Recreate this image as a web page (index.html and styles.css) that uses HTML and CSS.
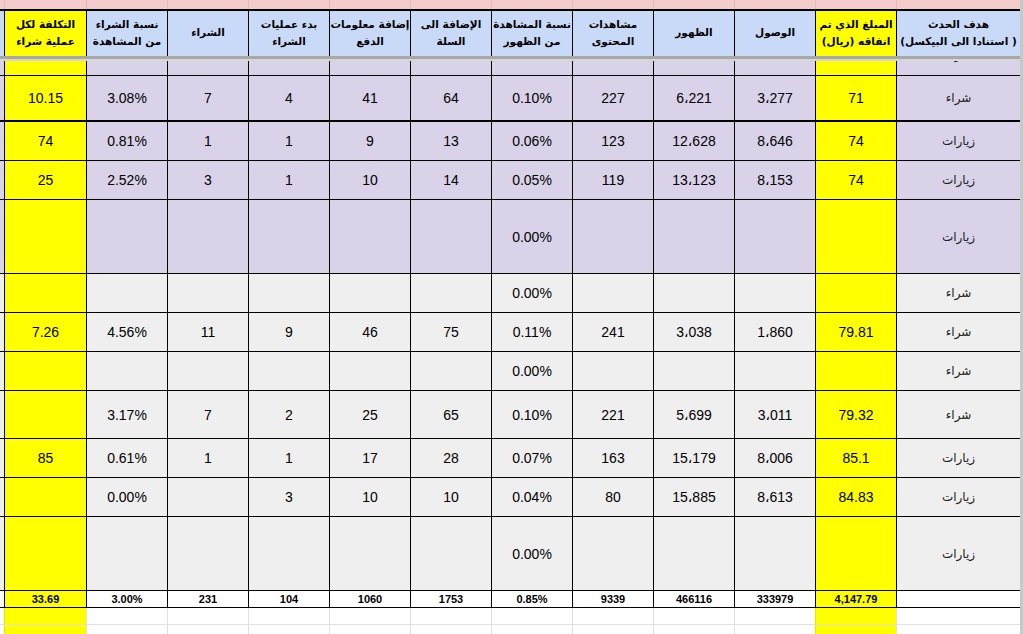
FILE: index.html
```html
<!DOCTYPE html>
<html lang="ar">
<head>
<meta charset="utf-8">
<title>تقرير الحملات</title>
<link rel="stylesheet" href="styles.css">
</head>
<body>
<div class="page">
  <div class="sheet" dir="rtl">
    <div class="row band">
      <div class="cell"></div><div class="cell"></div><div class="cell"></div><div class="cell"></div><div class="cell"></div><div class="cell"></div><div class="cell"></div><div class="cell"></div><div class="cell"></div><div class="cell"></div><div class="cell"></div><div class="cell"></div><div class="cell"></div>
    </div>
    <div class="row head">
      <div class="cell">هدف الحدث<br>( استنادا الى البيكسل)</div>
      <div class="cell y">المبلغ الذي تم<br>انفاقه (ريال)</div>
      <div class="cell">الوصول</div>
      <div class="cell">الظهور</div>
      <div class="cell">مشاهدات<br>المحتوى</div>
      <div class="cell">نسبة المشاهدة<br>من الظهور</div>
      <div class="cell">الإضافة الى<br>السلة</div>
      <div class="cell">إضافة معلومات<br>الدفع</div>
      <div class="cell">بدء عمليات<br>الشراء</div>
      <div class="cell">الشراء</div>
      <div class="cell">نسبة الشراء<br>من المشاهدة</div>
      <div class="cell y">التكلفة لكل<br>عملية شراء</div>
      <div class="cell"></div>
    </div>
    <div class="freeze"></div>

    <div class="row lav hA">
      <div class="cell clip"><span class="clipped">شراء</span></div><div class="cell y"></div><div class="cell"></div><div class="cell"></div><div class="cell"></div><div class="cell"></div><div class="cell"></div><div class="cell"></div><div class="cell"></div><div class="cell"></div><div class="cell"></div><div class="cell y"></div><div class="cell"></div>
    </div>
    <div class="row lav hB">
      <div class="cell ar">شراء</div><div class="cell y">71</div><div class="cell">3،277</div><div class="cell">6،221</div><div class="cell">227</div><div class="cell">0.10%</div><div class="cell">64</div><div class="cell">41</div><div class="cell">4</div><div class="cell">7</div><div class="cell">3.08%</div><div class="cell y">10.15</div><div class="cell"></div>
    </div>
    <div class="row lav h39">
      <div class="cell ar">زيارات</div><div class="cell y">74</div><div class="cell">8،646</div><div class="cell">12،628</div><div class="cell">123</div><div class="cell">0.06%</div><div class="cell">13</div><div class="cell">9</div><div class="cell">1</div><div class="cell">1</div><div class="cell">0.81%</div><div class="cell y">74</div><div class="cell"></div>
    </div>
    <div class="row lav h39">
      <div class="cell ar">زيارات</div><div class="cell y">74</div><div class="cell">8،153</div><div class="cell">13،123</div><div class="cell">119</div><div class="cell">0.05%</div><div class="cell">14</div><div class="cell">10</div><div class="cell">1</div><div class="cell">3</div><div class="cell">2.52%</div><div class="cell y">25</div><div class="cell"></div>
    </div>
    <div class="row lav h74">
      <div class="cell ar">زيارات</div><div class="cell y"></div><div class="cell"></div><div class="cell"></div><div class="cell"></div><div class="cell">0.00%</div><div class="cell"></div><div class="cell"></div><div class="cell"></div><div class="cell"></div><div class="cell"></div><div class="cell y"></div><div class="cell"></div>
    </div>
    <div class="row gry h39">
      <div class="cell ar">شراء</div><div class="cell y"></div><div class="cell"></div><div class="cell"></div><div class="cell"></div><div class="cell">0.00%</div><div class="cell"></div><div class="cell"></div><div class="cell"></div><div class="cell"></div><div class="cell"></div><div class="cell y"></div><div class="cell"></div>
    </div>
    <div class="row gry h39">
      <div class="cell ar">شراء</div><div class="cell y">79.81</div><div class="cell">1،860</div><div class="cell">3،038</div><div class="cell">241</div><div class="cell">0.11%</div><div class="cell">75</div><div class="cell">46</div><div class="cell">9</div><div class="cell">11</div><div class="cell">4.56%</div><div class="cell y">7.26</div><div class="cell"></div>
    </div>
    <div class="row gry h39">
      <div class="cell ar">شراء</div><div class="cell y"></div><div class="cell"></div><div class="cell"></div><div class="cell"></div><div class="cell">0.00%</div><div class="cell"></div><div class="cell"></div><div class="cell"></div><div class="cell"></div><div class="cell"></div><div class="cell y"></div><div class="cell"></div>
    </div>
    <div class="row gry h48">
      <div class="cell ar">شراء</div><div class="cell y">79.32</div><div class="cell">3،011</div><div class="cell">5،699</div><div class="cell">221</div><div class="cell">0.10%</div><div class="cell">65</div><div class="cell">25</div><div class="cell">2</div><div class="cell">7</div><div class="cell">3.17%</div><div class="cell y"></div><div class="cell"></div>
    </div>
    <div class="row gry h39">
      <div class="cell ar">زيارات</div><div class="cell y">85.1</div><div class="cell">8،006</div><div class="cell">15،179</div><div class="cell">163</div><div class="cell">0.07%</div><div class="cell">28</div><div class="cell">17</div><div class="cell">1</div><div class="cell">1</div><div class="cell">0.61%</div><div class="cell y">85</div><div class="cell"></div>
    </div>
    <div class="row gry h39">
      <div class="cell ar">زيارات</div><div class="cell y">84.83</div><div class="cell">8،613</div><div class="cell">15،885</div><div class="cell">80</div><div class="cell">0.04%</div><div class="cell">10</div><div class="cell">10</div><div class="cell">3</div><div class="cell"></div><div class="cell">0.00%</div><div class="cell y"></div><div class="cell"></div>
    </div>
    <div class="row gry h74">
      <div class="cell ar">زيارات</div><div class="cell y"></div><div class="cell"></div><div class="cell"></div><div class="cell"></div><div class="cell">0.00%</div><div class="cell"></div><div class="cell"></div><div class="cell"></div><div class="cell"></div><div class="cell"></div><div class="cell y"></div><div class="cell"></div>
    </div>
    <div class="row total">
      <div class="cell"></div><div class="cell y">4,147.79</div><div class="cell">333979</div><div class="cell">466116</div><div class="cell">9339</div><div class="cell">0.85%</div><div class="cell">1753</div><div class="cell">1060</div><div class="cell">104</div><div class="cell">231</div><div class="cell">3.00%</div><div class="cell y">33.69</div><div class="cell"></div>
    </div>
    <div class="row blank">
      <div class="cell"></div><div class="cell y"></div><div class="cell"></div><div class="cell"></div><div class="cell"></div><div class="cell"></div><div class="cell"></div><div class="cell"></div><div class="cell"></div><div class="cell"></div><div class="cell"></div><div class="cell y"></div><div class="cell"></div>
    </div>
    <div class="row blank">
      <div class="cell"></div><div class="cell y"></div><div class="cell"></div><div class="cell"></div><div class="cell"></div><div class="cell"></div><div class="cell"></div><div class="cell"></div><div class="cell"></div><div class="cell"></div><div class="cell"></div><div class="cell y"></div><div class="cell"></div>
    </div>
  </div>
  <div class="scroll"></div>
</div>
</body>
</html>
```
FILE: styles.css
```css
* { box-sizing: border-box; }
body {
  margin: 0;
  background: #fff;
  font-family: "Liberation Sans", "DejaVu Sans", sans-serif;
  color: #000;
}
.page {
  display: flex;
  height: 634px;
  overflow: hidden;
}
.sheet {
  width: 1020px;
  display: flex;
  flex-direction: column;
}
.scroll {
  width: 3px;
  background: #c8c8c8;
}
.row {
  display: grid;
  grid-template-columns: 124px repeat(10, 81px) 82px 4px;
  border-bottom: 1px solid #000;
  flex: none;
}
.cell {
  border-left: 1px solid #000;
  display: flex;
  align-items: center;
  justify-content: center;
  text-align: center;
  font-size: 14px;
  overflow: hidden;
  white-space: nowrap;
}
.cell:last-child { border-left: none; }
.y { background: #ffff00; }

.band {
  height: 9px;
  background: #f4cccc;
  border-bottom: none;
}
.band .cell { border-left-color: #e3b9b9; }

.head {
  height: 47px;
  background: #c9daf8;
  border-top: 2px solid #000;
  border-bottom: none;
}
.head .cell {
  font-weight: bold;
  font-size: 10.5px;
  line-height: 17px;
  font-family: "DejaVu Sans", sans-serif;
  padding-bottom: 2px;
}

.freeze {
  flex: none;
  height: 5px;
  background: #d6d6d6;
  border-top: 3px solid #a8a8a8;
}

.lav { background: #d9d2e9; }
.gry { background: #efefef; }

.ar {
  font-family: "DejaVu Sans", sans-serif;
  font-size: 12px;
  color: #222;
}

.hA { height: 15px; }
.hB { height: 46px; border-bottom-width: 2px; }
.h39 { height: 39px; }
.h48 { height: 48px; }
.h74 { height: 74px; }

.clip {
  align-items: flex-start;
  font-family: "DejaVu Sans", sans-serif;
  font-size: 12px;
  color: #222;
}
.clipped {
  display: block;
  margin-top: -15px;
  line-height: 18px;
}

.total {
  height: 17px;
  background: #fff;
}
.total .cell {
  font-weight: bold;
  font-size: 11px;
}

.blank {
  height: 17px;
  background: #fff;
  border-bottom-color: #e0e0e0;
}
.blank .cell { border-left-color: #e0e0e0; }
.blank .cell.y { border-left-color: #e6e600; }
.blank:last-child { height: 30px; }
```
